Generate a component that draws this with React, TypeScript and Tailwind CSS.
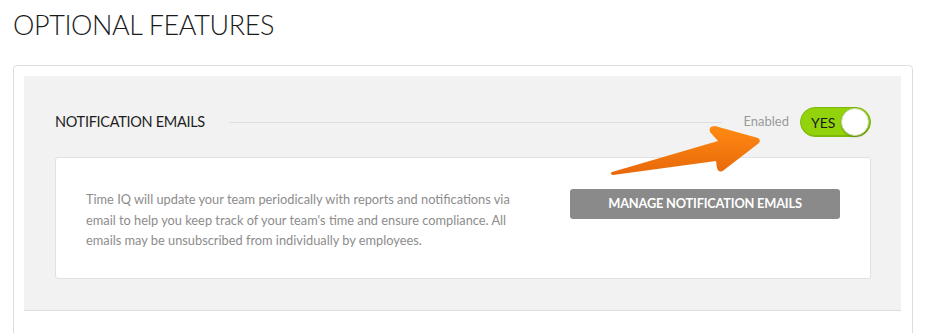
import type { ReactNode } from 'react';

function Toggle({ on }: { on: boolean }) {
  return (
    <div className="relative flex h-[30px] w-[71px] items-center rounded-full border border-[#7fb80a] bg-[#93d30c] pl-[10px] shadow-[inset_0_-1px_0_rgba(0,0,0,0.12)]">
      <span className="text-[14px] font-normal text-[#1b1b1b]">{on ? 'YES' : 'NO'}</span>
      <span className="absolute right-[1px] top-[0px] h-[28px] w-[28px] rounded-full border border-[#c9d9a8] bg-white shadow-[0_1px_2px_rgba(0,0,0,0.25)]" />
    </div>
  );
}

function Arrow() {
  return (
    <svg
      className="pointer-events-none absolute left-[600px] top-[115px]"
      width="180"
      height="70"
      viewBox="0 0 180 70"
    >
      <defs>
        <linearGradient id="arrowFill" x1="0" y1="0" x2="0" y2="1">
          <stop offset="0" stopColor="#ff8a12" />
          <stop offset="1" stopColor="#e8680a" />
        </linearGradient>
      </defs>
      <path
        d="M12 57 L118 26 L110 17 Q108 11 115 11 L158 23 Q161 25 159 28 L124 55 Q119 59 117 53 L116 46 L13 60 Q9 59 12 57 Z"
        fill="url(#arrowFill)"
      />
    </svg>
  );
}

function Section({ title, children }: { title: string; children: ReactNode }) {
  return (
    <div className="border-b border-[#dcdcdc] bg-[#f2f2f2] pb-[31px] pl-[31px] pr-[30px] pt-[31px]">
      <div className="flex h-[30px] items-center">
        <span className="text-[14.5px] tracking-[-0.3px] text-[#1e1e1e]">{title}</span>
        <div className="ml-[24px] h-px flex-1 bg-[#dedede]" />
        <span className="ml-[21px] text-[13px] text-[#9a9a9a]">Enabled</span>
        <div className="ml-[11px]">
          <Toggle on />
        </div>
      </div>
      <div className="mt-[20px]">{children}</div>
    </div>
  );
}

export default function App() {
  return (
    <div className="relative h-[333px] w-[926px] overflow-hidden bg-white font-['Lato','Liberation_Sans',sans-serif]">
      <h1 className="pl-[13px] pt-[8px] text-[27px] font-light leading-[34px] tracking-[-0.4px] text-[#1a1a1a]">
        OPTIONAL FEATURES
      </h1>
      <div className="mx-[13px] mt-[23px] rounded-[4px] border border-[#dedede] pb-[40px] pl-[10px] pr-[11px] pt-[10px]">
        <Section title="NOTIFICATION EMAILS">
          <div className="flex justify-between rounded-[3px] border border-[#e1e1e1] bg-white pb-[27px] pl-[30px] pr-[30px] pt-[31px]">
            <p className="w-[430px] text-[12.8px] leading-[20.5px] text-[#8c8c8c]">
              Time IQ will update your team periodically with reports and notifications via email to help you keep
              track of your team's time and ensure compliance. All emails may be unsubscribed from individually by
              employees.
            </p>
            <button className="h-[30px] w-[270px] rounded-[3px] bg-[#8a8a8a] text-[12.8px] font-bold tracking-[-0.2px] text-white">
              MANAGE NOTIFICATION EMAILS
            </button>
          </div>
        </Section>
      </div>
      <Arrow />
    </div>
  );
}
